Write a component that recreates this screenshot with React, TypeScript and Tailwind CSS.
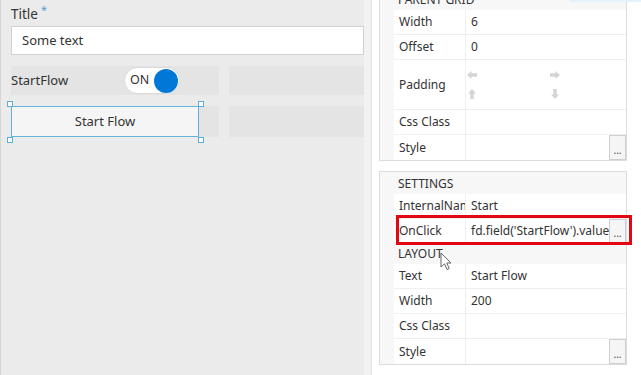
import type { ReactNode } from "react";

function DotsButton() {
  return (
    <div className="w-[17px] h-full border border-[#cfcfcf] bg-[#f5f5f5] flex items-end justify-center pb-[4px] text-[10px] leading-none text-[#444]">
      ...
    </div>
  );
}

// chunky arrow used by the padding editor
function FatArrow({ rotate }: { rotate: string }) {
  return (
    <svg width="10" height="8" viewBox="0 0 10 8" className={rotate}>
      <polygon points="0,4 4.5,0 4.5,2.3 10,2.3 10,5.7 4.5,5.7 4.5,8" fill="#d4d4d4" />
    </svg>
  );
}

function PropRow({
  label,
  value,
  height = "h-[25px]",
  button = false,
  children,
}: {
  label: string;
  value?: string;
  height?: string;
  button?: boolean;
  children?: ReactNode;
}) {
  return (
    <div className={`relative flex bg-white border-b border-[#efefef] ${height}`}>
      <div className="w-[71px] shrink-0 flex items-center pl-[5px] overflow-hidden whitespace-nowrap">{label}</div>
      <div className="flex-1 min-w-0 flex items-center border-l border-[#efefef]">
        <div className="flex-1 min-w-0 pl-[5px] overflow-hidden whitespace-nowrap">{value}</div>
        {button && <DotsButton />}
      </div>
      {children}
    </div>
  );
}

function SectionHeader({ title, height }: { title: string; height: string }) {
  return <div className={`flex items-center pl-[18px] pt-[1px] uppercase text-[12px] ${height}`}>{title}</div>;
}

function Handle({ pos }: { pos: string }) {
  return <div className={`absolute w-[6px] h-[6px] bg-white border border-[#5aaed8] ${pos}`} />;
}

export default function App() {
  return (
    <div className="relative w-[641px] h-[375px] flex overflow-hidden text-[#333] font-['Segoe_UI','Noto_Sans',sans-serif]">
      {/* form canvas */}
      <div className="w-[364px] h-full bg-[#ebebeb] border-l border-[#d6d6d6] pl-[10px] pt-[4px]">
        <div className="h-[22px] flex items-start text-[13.5px] leading-[20px]">
          Title<span className="ml-[3px] text-[11px] leading-[12px] text-[#5b9fd4]">*</span>
        </div>
        <div className="h-[29px] bg-white border border-[#d2d2d2] flex items-center pl-[10px] text-[13px]">Some text</div>

        <div className="mt-[11px] flex gap-[10px] h-[29px]">
          <div className="w-[208px] bg-[#e4e4e4] flex items-center text-[13px]">
            <span className="w-[113px]">StartFlow</span>
            <div className="w-[56px] h-[27px] rounded-full bg-white border border-[#dadada] flex items-center justify-between pl-[5px] pr-[1px]">
              <span className="text-[12.5px]">ON</span>
              <span className="w-[24px] h-[24px] rounded-full bg-[#0078d7]" />
            </div>
          </div>
          <div className="flex-1 bg-[#e4e4e4]" />
        </div>

        <div className="mt-[11px] flex gap-[10px] h-[31px]">
          <div className="w-[208px] bg-[#e4e4e4]">
            <div className="relative w-[188px] h-full bg-[#f5f5f5] border border-[#66b3da] flex items-center justify-center text-[13px]">
              Start Flow
              <Handle pos="-left-[5px] -top-[6px]" />
              <Handle pos="-right-[6px] -top-[6px]" />
              <Handle pos="-left-[5px] -bottom-[7px]" />
              <Handle pos="-right-[6px] -bottom-[7px]" />
            </div>
          </div>
          <div className="flex-1 bg-[#e4e4e4]" />
        </div>
      </div>

      {/* splitter */}
      <div className="w-[8px] h-full bg-[#f2f2f2] border-r border-[#e2e2e2]" />

      {/* properties panel */}
      <div className="relative flex-1 h-full bg-white pl-[7px] text-[12px]">
        <div className="absolute right-0 top-0 w-[71px] h-[2px] bg-[#e3f3f9]" />

        <div className="w-[248px] -mt-[12px] border border-[#dcdcdc] bg-[#f7f7f7]">
          <SectionHeader title="Parent Grid" height="h-[21px]" />
          <div className="ml-[14px]">
            <PropRow label="Width" value="6" />
            <PropRow label="Offset" value="0" />
            <div className="flex bg-white border-b border-[#efefef] h-[50px]">
              <div className="w-[71px] shrink-0 flex items-center pl-[5px]">Padding</div>
              <div className="flex-1 border-l border-[#efefef] grid grid-cols-[83px_1fr] grid-rows-2 pl-[1px] py-[5px]">
                <div className="flex items-center"><FatArrow rotate="" /></div>
                <div className="flex items-center"><FatArrow rotate="rotate-180" /></div>
                <div className="flex items-center"><FatArrow rotate="rotate-90" /></div>
                <div className="flex items-center"><FatArrow rotate="-rotate-90" /></div>
              </div>
            </div>
            <PropRow label="Css Class" />
            <PropRow label="Style" button height="h-[25px] border-b-0" />
          </div>
        </div>

        <div className="w-[248px] mt-[10px] border border-[#dcdcdc] bg-[#f7f7f7]">
          <SectionHeader title="Settings" height="h-[22px]" />
          <div className="ml-[14px]">
            <PropRow label="InternalName" value="Start" />
            <PropRow label="OnClick" value="fd.field('StartFlow').value = true;" button>
              <div className="absolute left-[2px] -right-[6px] -top-[4px] -bottom-[2px] border-[3px] border-[#e30613]" />
            </PropRow>
          </div>
          <div className="h-[20px] flex items-center pl-[18px] uppercase text-[12px]">Layout</div>
          <div className="ml-[14px]">
            <PropRow label="Text" value="Start Flow" />
            <PropRow label="Width" value="200" />
            <PropRow label="Css Class" />
            <PropRow label="Style" button height="h-[25px] border-b-0" />
          </div>
        </div>
      </div>

      {/* mouse pointer */}
      <svg className="absolute left-[440px] top-[252px]" width="13" height="19" viewBox="0 0 13 19">
        <path d="M1 1 L1 15 L4.5 11.8 L7 17.5 L9.2 16.5 L6.8 11 L11 11 Z" fill="#fff" stroke="#666" strokeWidth="1" strokeLinejoin="round" />
      </svg>
    </div>
  );
}
